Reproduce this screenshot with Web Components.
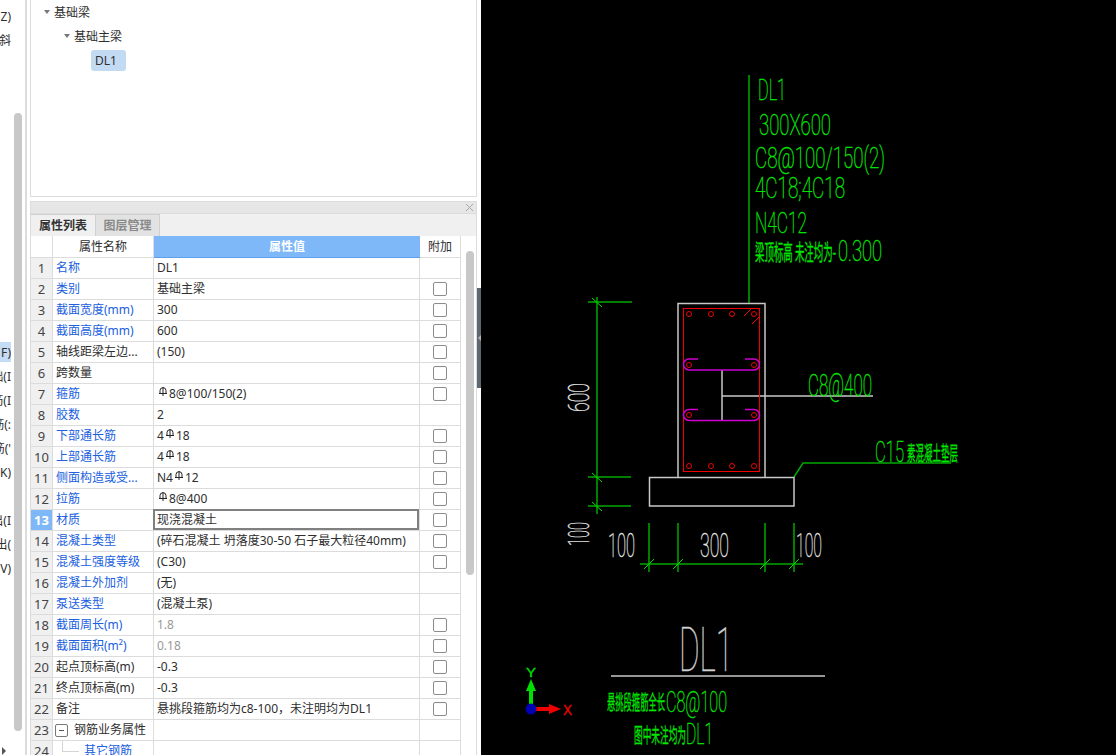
<!DOCTYPE html>
<html lang="zh">
<head>
<meta charset="utf-8">
<title>DL1</title>
<style>
html, body { margin: 0; padding: 0; height: 100%; overflow: hidden; background: #000; }
body { font: 12px "Noto Sans", "Noto Sans CJK SC", sans-serif; color: #2e2e2e; }
</style>
</head>
<body>
<app-shell>
    <side-strip slot="strip"></side-strip>
    <tree-panel slot="tree">
        <tree-node depth="0" open>基础梁</tree-node>
        <tree-node depth="1" open>基础主梁</tree-node>
        <tree-node depth="2" selected>DL1</tree-node>
    </tree-panel>
    <prop-panel slot="props">
        <prop-row num="1" name="名称" link>DL1</prop-row>
        <prop-row num="2" name="类别" link check>基础主梁</prop-row>
        <prop-row num="3" name="截面宽度(mm)" link check>300</prop-row>
        <prop-row num="4" name="截面高度(mm)" link check>600</prop-row>
        <prop-row num="5" name="轴线距梁左边..." check>(150)</prop-row>
        <prop-row num="6" name="跨数量" check></prop-row>
        <prop-row num="7" name="箍筋" link check><rebar-mark></rebar-mark>8@100/150(2)</prop-row>
        <prop-row num="8" name="胶数" link>2</prop-row>
        <prop-row num="9" name="下部通长筋" link check>4<rebar-mark></rebar-mark>18</prop-row>
        <prop-row num="10" name="上部通长筋" link check>4<rebar-mark></rebar-mark>18</prop-row>
        <prop-row num="11" name="侧面构造或受..." link check>N4<rebar-mark></rebar-mark>12</prop-row>
        <prop-row num="12" name="拉筋" link check><rebar-mark></rebar-mark>8@400</prop-row>
        <prop-row num="13" name="材质" link check active>现浇混凝土</prop-row>
        <prop-row num="14" name="混凝土类型" link check>(碎石混凝土 坍落度30-50 石子最大粒径40mm)</prop-row>
        <prop-row num="15" name="混凝土强度等级" link check>(C30)</prop-row>
        <prop-row num="16" name="混凝土外加剂" link>(无)</prop-row>
        <prop-row num="17" name="泵送类型" link>(混凝土泵)</prop-row>
        <prop-row num="18" name="截面周长(m)" link check muted>1.8</prop-row>
        <prop-row num="19" name="截面面积(m²)" link check muted>0.18</prop-row>
        <prop-row num="20" name="起点顶标高(m)" check>-0.3</prop-row>
        <prop-row num="21" name="终点顶标高(m)" check>-0.3</prop-row>
        <prop-row num="22" name="备注" check>悬挑段箍筋均为c8-100，未注明均为DL1</prop-row>
        <prop-row num="23" name="钢筋业务属性" group></prop-row>
        <prop-row num="24" name="其它钢筋" link child></prop-row>
    </prop-panel>
    <cad-view slot="cad"></cad-view>
</app-shell>

<script>
class AppShell extends HTMLElement {
    connectedCallback() {
        this.attachShadow({ mode: 'open' });
        this.shadowRoot.innerHTML = `
            <style>
                :host { display: flex; width: 1116px; height: 755px; overflow: hidden; }
                .left { width: 477px; flex: none; display: flex; background: #fff; }
                .strip { width: 25px; flex: none; border-right: 2px solid #dcdcdc; }
                .main { flex: 1; min-width: 0; padding-left: 3px; display: flex; flex-direction: column; gap: 4px; }
                .splitter { width: 4px; flex: none; background: #fff; padding-top: 288px; box-sizing: border-box; }
                .grip { width: 4px; height: 100px; background: #5e6770; display: flex; align-items: center; justify-content: center; }
                .grip i { width: 0; height: 0; border: 3px solid transparent; border-right-color: #aeb4ba; border-left: 0; }
                .cad { flex: 1; min-width: 0; }
            </style>
            <div class="left">
                <div class="strip"><slot name="strip"></slot></div>
                <div class="main">
                    <slot name="tree"></slot>
                    <slot name="props"></slot>
                </div>
            </div>
            <div class="splitter"><div class="grip"><i></i></div></div>
            <div class="cad"><slot name="cad"></slot></div>
        `;
    }
}

class SideStrip extends HTMLElement {
    connectedCallback() {
        this.attachShadow({ mode: 'open' });
        const rows = { 0: 'Z)', 1: '斜', 14: 'F)', 15: '础(I', 16: '筋(I', 17: '筋(:', 18: '筋(\'', 19: 'K)', 21: '出(I', 22: '出(', 23: 'V)' };
        let html = '';
        for (let i = 0; i < 24; i++) {
            html += `<div class="row${i === 14 ? ' on' : ''}"><span>${rows[i] || ''}</span></div>`;
        }
        this.shadowRoot.innerHTML = `
            <style>
                :host { display: block; position: relative; height: 755px; overflow: hidden; }
                .rows { width: 11px; padding-top: 4px; }
                .row { height: 24px; display: flex; justify-content: flex-end; align-items: center; overflow: hidden; white-space: nowrap; }
                .row.on { background: linear-gradient(#fff 0 2px, #c4dcf5 2px 22px, #fff 22px); }
                .thumb { position: absolute; left: 14px; top: 113px; width: 8px; height: 618px; border-radius: 4px; background: #c8c8c8; }
                .arrow { position: absolute; left: 2px; top: 747px; width: 0; height: 0; border: 4px solid transparent; border-left: 4px solid #555; border-right: 0; }
            </style>
            <div class="rows">${html}</div>
            <div class="thumb"></div>
            <div class="arrow"></div>
        `;
    }
}

class TreePanel extends HTMLElement {
    connectedCallback() {
        this.attachShadow({ mode: 'open' });
        this.shadowRoot.innerHTML = `
            <style>
                :host { display: block; height: 197px; box-sizing: border-box; border: 1px solid #dcdcdc; border-top: 0; }
            </style>
            <slot></slot>
        `;
    }
}

class TreeNode extends HTMLElement {
    connectedCallback() {
        this.attachShadow({ mode: 'open' });
        const depth = Number(this.getAttribute('depth'));
        const arrow = this.hasAttribute('open') ? '<i class="arrow"></i>' : '<i class="gap"></i>';
        this.shadowRoot.innerHTML = `
            <style>
                :host { display: flex; align-items: center; height: 24px; padding-left: ${13 + depth * 20}px; }
                .arrow { width: 0; height: 0; border: 3px solid transparent; border-top: 4px solid #777; border-bottom: 0; margin-right: 4px; }
                .gap { width: 6px; margin-right: 4px; }
                .label { line-height: 21px; height: 21px; }
                :host([selected]) .label { background: #c3daf3; border-radius: 3px; width: 31px; padding-left: 4px; margin-left: -3px; }
            </style>
            ${arrow}<span class="label"><slot></slot></span>
        `;
    }
}

class PropPanel extends HTMLElement {
    connectedCallback() {
        this.attachShadow({ mode: 'open' });
        this.shadowRoot.innerHTML = `
            <style>
                :host { display: block; height: 554px; overflow: hidden; border: solid #dcdcdc; border-width: 1px 1px 0 1px; box-sizing: border-box; }
                .title { height: 11px; background: #e6e6e6; border-bottom: 1px solid #dcdcdc; position: relative; }
                .close { position: absolute; right: 2px; top: 1px; width: 9px; height: 9px; }
                .tabs { height: 22px; background: #f0f0f0; display: flex; align-items: stretch; }
                .tab { width: 64px; box-sizing: border-box; text-align: center; font-weight: 700; line-height: 22px; border: 1px solid #d0d0d0; border-left: 0; border-bottom: 0; }
                .tab.on { color: #333; background: #f0f0f0; width: 65px; }
                .tab.off { color: #8a8a8a; background: #e2e2e2; }
                .wrap { display: flex; }
                .grid { width: 430px; flex: none; }
                .head { display: grid; grid-template-columns: 22px 101px 266px 41px; height: 21px; border-bottom: 1px solid #dcdcdc; line-height: 21px; text-align: center; background: #fff; }
                .head div { border-right: 1px solid #dcdcdc; box-sizing: border-box; }
                .head .val { background: #7eb8f8; color: #fff; font-weight: 700; border-bottom: 1px solid #5fa0ec; height: 22px; border-right: 0; }
                .track { flex: 1; position: relative; background: #fff; }
                .thumb { width: 8px; height: 324px; margin: 15px 0 0 5px; background: #c8c8c8; border-radius: 4px; }
            </style>
            <div class="title">
                <svg class="close" viewBox="0 0 9 9"><path d="M1 1L8 8M8 1L1 8" stroke="#a8a8a8" fill="none"/></svg>
            </div>
            <div class="tabs">
                <div class="tab on">属性列表</div>
                <div class="tab off">图层管理</div>
            </div>
            <div class="wrap">
                <div class="grid">
                    <div class="head">
                        <div></div>
                        <div>属性名称</div>
                        <div class="val">属性值</div>
                        <div>附加</div>
                    </div>
                    <slot></slot>
                </div>
                <div class="track"><div class="thumb"></div></div>
            </div>
        `;
    }
}

class PropRow extends HTMLElement {
    connectedCallback() {
        this.attachShadow({ mode: 'open' });
        const name = this.getAttribute('name');
        const box = this.hasAttribute('check') ? '<span class="box"></span>' : '';
        let label = `<span>${name}</span>`;
        if (this.hasAttribute('group')) label = `<span class="minus"></span><span>${name}</span>`;
        if (this.hasAttribute('child')) label = `<span class="branch"></span><span>${name}</span>`;
        this.shadowRoot.innerHTML = `
            <style>
                :host { display: grid; grid-template-columns: 22px 101px 266px 41px; height: 21px; box-sizing: border-box; border-bottom: 1px solid #dcdcdc; line-height: 20px; background: #fff; white-space: nowrap; }
                .num { background: #f0f0f0; border-right: 1px solid #dcdcdc; text-align: center; color: #444; font-size: 13px; }
                .name { padding-left: 3px; border-right: 1px solid #dcdcdc; overflow: hidden; display: flex; align-items: center; }
                .val { padding-left: 3px; border-right: 1px solid #dcdcdc; overflow: hidden; display: flex; align-items: center; }
                .extra { border-right: 1px solid #dcdcdc; display: flex; align-items: center; justify-content: center; }
                .box { width: 12px; height: 12px; border: 1px solid #8c8c8c; border-radius: 2px; background: #fff; }
                :host([link]) .name { color: #2060e0; }
                :host([muted]) .val { color: #999; }
                :host([active]) .num { background: #7eb8f8; color: #fff; font-weight: 700; }
                :host([active]) .val { box-shadow: inset 0 0 0 2px #808080; margin: -1px 0 -1px -1px; padding-left: 4px; height: 21px; }
                .minus { width: 11px; height: 11px; border: 1px solid #777; border-radius: 2px; margin: 0 6px 0 -1px; position: relative; flex: none; }
                .minus::after { content: ""; position: absolute; left: 3px; right: 3px; top: 5px; height: 1px; background: #555; }
                .branch { width: 17px; height: 11px; margin: -10px 5px 0 6px; border-left: 1px solid #d4d4d4; border-bottom: 1px solid #d4d4d4; flex: none; box-sizing: border-box; }
            </style>
            <div class="num">${this.getAttribute('num')}</div>
            <div class="name">${label}</div>
            <div class="val"><span><slot></slot></span></div>
            <div class="extra">${box}</div>
        `;
    }
}

class RebarMark extends HTMLElement {
    connectedCallback() {
        this.attachShadow({ mode: 'open' });
        this.shadowRoot.innerHTML = `
            <style>
                :host { display: inline-block; width: 8px; height: 9px; margin: 0 2px; vertical-align: 2px; }
                svg { display: block; }
            </style>
            <svg width="8" height="9" viewBox="0 0 8 9"><path d="M1 6.5V3.5A3 2.8 0 0 1 7 3.5V6.5M0 6.5H8M4 0V9" stroke="#222" fill="none"/></svg>
        `;
    }
}

// helper for the drawing texts: x, baseline y, width, font size
function cadText(str, x, y, w, size, fill, cls) {
    return `<text x="${x}" y="${y}" textLength="${w}" lengthAdjust="spacingAndGlyphs" font-size="${size}" fill="${fill}" stroke="${fill}" class="${cls || 't'}">${str}</text>`;
}

class CadView extends HTMLElement {
    connectedCallback() {
        this.attachShadow({ mode: 'open' });
        const g = '#00e800', w = '#e4e4e4';
        const texts = [
            cadText('DL1', 758, 100, 28, 30, g),
            cadText('300X600', 759, 135, 72, 30, g),
            cadText('C8@100/150(2)', 755, 168, 130, 29, g),
            cadText('4C18;4C18', 755, 198, 90, 30, g),
            cadText('N4C12', 755, 233, 52, 30, g),
            cadText('梁顶标高 未注均为-', 755, 260, 81, 22, g, 'c'),
            cadText('0.300', 838, 261, 44, 30, g),
            cadText('C8@400', 808, 396, 64, 31, g),
            cadText('C15', 875, 462, 29, 30, g),
            cadText('素混凝土垫层', 907, 461, 51, 20, g, 'c'),
            cadText('100', 608, 557, 27, 33, w),
            cadText('300', 700, 557, 29, 33, w),
            cadText('100', 796, 557, 26, 33, w),
            `<g transform="translate(589 412) rotate(-90)">${cadText('600', 0, 0, 29, 30, w)}</g>`,
            `<g transform="translate(589 546) rotate(-90)">${cadText('100', 0, 0, 24, 30, w)}</g>`,
            cadText('DL1', 679, 671, 54, 61, '#d0d0d0'),
            cadText('悬挑段箍筋全长', 607, 710, 58, 20, g, 'c'),
            cadText('C8@100', 666, 712, 61, 30, g),
            cadText('图中未注均为', 634, 743, 52, 20, g, 'c'),
            cadText('DL1', 686, 744, 27, 30, g),
            cadText('Y', 526, 677, 10, 13, '#00e000', 'a'),
            cadText('X', 563, 715, 9, 15, '#f00000', 'a')
        ].join('');
        const slash = (x, y) => `M${x - 5} ${y - 4}L${x + 5} ${y + 5}`;
        const back = (x, y) => `M${x - 5} ${y + 5}L${x + 5} ${y - 5}`;
        const bars = [[689, 314], [711, 314], [732, 314], [754, 314], [689, 466], [711, 466], [732, 466], [754, 466], [689, 365], [754, 365], [689, 415], [754, 415]]
            .map(p => `<circle cx="${p[0]}" cy="${p[1]}" r="2.5"/>`).join('');
        this.shadowRoot.innerHTML = `
            <style>
                :host { display: block; height: 755px; background: #000; }
                svg { display: block; }
                .t { font-family: Roboto, "Liberation Sans", sans-serif; font-weight: 100; stroke-width: .45; }
                .c { font-family: "Noto Sans CJK SC", sans-serif; font-weight: 400; stroke-width: .3; }
                .a { font-family: "Liberation Sans", sans-serif; font-weight: 400; stroke-width: .3; }
            </style>
            <svg width="635" height="755" viewBox="481 0 635 755" fill="none">
                <g stroke="#00a800" stroke-width="1.5">
                    <path d="M749 75V303"/>
                    <path d="M597 297V514M588 302H632M588 477H631M588 506H631"/>
                    <path d="M649 523V572M678 523V572M765 523V572M794 523V572M640 564H803"/>
                    <path d="M794 477L803 463H951"/>
                </g>
                <path stroke="#00e000" d="${slash(597, 302)}${slash(597, 477)}${slash(597, 506)}${back(649, 564)}${back(678, 564)}${back(765, 564)}${back(794, 564)}"/>
                <g stroke="#c8c8c8" stroke-width="1.5">
                    <path d="M678 477V303.5H765V477"/>
                    <path d="M649.5 477.5H794V506H649.5Z"/>
                    <path d="M722 370V421M722 396H873"/>
                    <path d="M611 676H825"/>
                </g>
                <g stroke="#f00000">
                    <rect x="683.5" y="308.5" width="76" height="163"/>
                    ${bars}
                    <path d="M744 316L751 309M752 324L759 317"/>
                </g>
                <g stroke="#d000d0" stroke-width="1.5">
                    <path d="M698 359H689A5.5 5.5 0 0 0 689 370H754A5.5 5.5 0 0 0 754 359H745"/>
                    <path d="M698 409.5H689A5.5 5.5 0 0 0 689 420.5H754A5.5 5.5 0 0 0 754 409.5H745"/>
                </g>
                <rect x="529" y="690" width="4" height="15" fill="#00e000"/>
                <path d="M531 679L536 691H526Z" fill="#00e000"/>
                <rect x="536" y="707" width="14" height="4" fill="#f00000"/>
                <path d="M561 709L549 704V714Z" fill="#f00000"/>
                <circle cx="531" cy="709" r="5.5" fill="#0000b0"/>
                ${texts}
            </svg>
        `;
    }
}

customElements.define('app-shell', AppShell);
customElements.define('side-strip', SideStrip);
customElements.define('tree-panel', TreePanel);
customElements.define('tree-node', TreeNode);
customElements.define('prop-panel', PropPanel);
customElements.define('prop-row', PropRow);
customElements.define('rebar-mark', RebarMark);
customElements.define('cad-view', CadView);
</script>
</body>
</html>
